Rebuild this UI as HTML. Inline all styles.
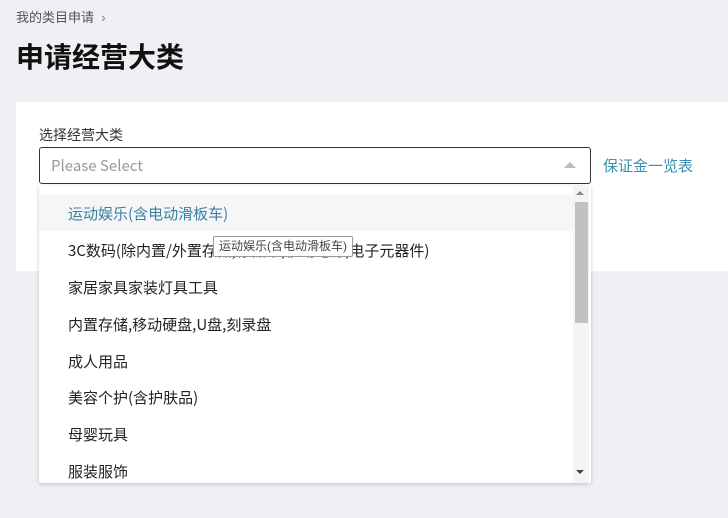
<!DOCTYPE html><html><head><meta charset="utf-8"><style>
body{margin:0;width:728px;height:518px;background:#eff0f4;font-family:"Liberation Sans","Noto Sans CJK SC",sans-serif;position:relative;overflow:hidden}
.a{position:absolute;white-space:nowrap}
.i{font-family:"Noto Sans CJK SC",sans-serif;font-size:15px;color:#222;line-height:18px}
</style></head><body>
<div class="a" style="left:16px;top:7px;font-size:13px;color:#555">我的类目申请 &nbsp;<span style="color:#777">›</span></div>
<div class="a" style="left:16px;top:36px;font-size:28px;font-weight:bold;color:#111">申请经营大类</div>
<div class="a" style="left:16px;top:102px;width:712px;height:169px;background:#fff"></div>
<div class="a" style="left:39px;top:125px;font-size:14px;color:#333">选择经营大类</div>
<div class="a" style="left:39px;top:147px;width:550px;height:35px;border:1px solid #333;border-radius:3px;background:#fff"></div>
<div class="a i" style="left:51px;top:157px;font-size:15px;color:#999">Please Select</div>
<div class="a" style="left:564px;top:162px;width:0;height:0;border-left:6px solid transparent;border-right:6px solid transparent;border-bottom:6px solid #bbb"></div>
<div class="a" style="left:603px;top:155px;font-size:15px;color:#3a8fb0">保证金一览表</div>
<div class="a" style="left:39px;top:186px;width:552px;height:297px;background:#fff;box-shadow:0 1px 4px rgba(0,0,0,.2);border-radius:2px"></div>
<div class="a" style="left:39px;top:195px;width:534px;height:36px;background:#f5f6f8"></div>
<div class="a i" style="left:68px;top:205px;color:#3a7fa0">运动娱乐(含电动滑板车)</div>
<div class="a i" style="left:68px;top:242px">3C数码(除内置/外置存储,存储卡,移动电源,电子元器件)</div>
<div class="a i" style="left:68px;top:279px">家居家具家装灯具工具</div>
<div class="a i" style="left:68px;top:316px">内置存储,移动硬盘,U盘,刻录盘</div>
<div class="a i" style="left:68px;top:353px">成人用品</div>
<div class="a i" style="left:68px;top:389px">美容个护(含护肤品)</div>
<div class="a i" style="left:68px;top:426px">母婴玩具</div>
<div class="a i" style="left:68px;top:463px">服装服饰</div>
<div class="a" style="left:573px;top:186px;width:16px;height:297px;background:#f4f4f4"></div>
<div class="a" style="left:576px;top:191px;border-left:4px solid transparent;border-right:4px solid transparent;border-bottom:4px solid #888"></div>
<div class="a" style="left:576px;top:470px;border-left:4px solid transparent;border-right:4px solid transparent;border-top:4px solid #444"></div>
<div class="a" style="left:575px;top:202px;width:13px;height:121px;background:#c1c1c1"></div>
<div class="a" style="left:213px;top:236px;width:138px;height:19px;background:#fff;border:1px solid #999;border-radius:2px;font-size:12px;color:#444;line-height:19px;text-align:center">运动娱乐(含电动滑板车)</div>
</body></html>
